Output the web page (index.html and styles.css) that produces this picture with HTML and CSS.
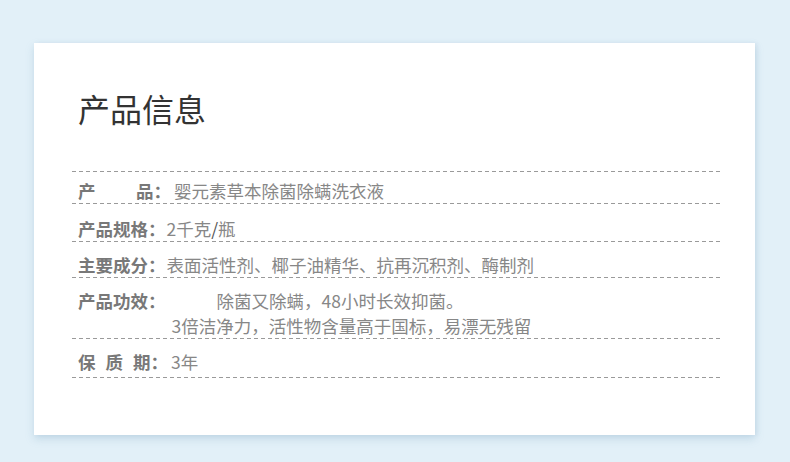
FILE: index.html
```html
<!DOCTYPE html>
<html lang="zh-CN">
<head>
<meta charset="utf-8">
<title>产品信息</title>
<link rel="stylesheet" href="styles.css">
</head>
<body>
<div class="page">
  <section class="card">
    <h1 class="title">产品信息</h1>
    <div class="list">
      <div class="row r1"><span class="label"><span class="sp1">产</span>品：</span><span class="value v1">婴元素草本除菌除螨洗衣液</span></div>
      <div class="row r2"><span class="label">产品规格：</span><span class="value v2">2千克<span class="slash">/</span>瓶</span></div>
      <div class="row r3"><span class="label">主要成分：</span><span class="value v2">表面活性剂、椰子油精华、抗再沉积剂、酶制剂</span></div>
      <div class="row r4"><span class="label">产品功效：</span><span class="value v4"><span class="l1">除菌又除螨，48小时长效抑菌。</span><span class="l2">3倍洁净力，活性物含量高于国标，易漂无残留</span></span></div>
      <div class="row r5"><span class="label"><span class="sp5">保质</span>期：</span><span class="value v5">3年</span></div>
    </div>
  </section>
</div>
</body>
</html>
```

FILE: styles.css
```css
html, body {
  margin: 0;
  padding: 0;
}
body {
  background: #e2f0f8;
  font-family: "Noto Sans CJK SC", "Noto Sans", sans-serif;
  width: 790px;
  height: 462px;
  overflow: hidden;
}
.page {
  padding: 43px 35px 0 34px;
}
.card {
  box-sizing: border-box;
  width: 721px;
  height: 392px;
  background: #fff;
  box-shadow: 0 4px 8px rgba(120, 160, 190, 0.28), 2px 0 4px rgba(120, 160, 190, 0.12);
  padding: 45px 35px 0 38px;
}
.title {
  margin: 0 0 43px 6px;
  font-size: 32px;
  line-height: 40px;
  font-weight: 400;
  color: #333;
}
.list {
  background: repeating-linear-gradient(to right, #9a9a9a 0 4px, transparent 4px 7px) top left / 100% 1px no-repeat;
  padding-top: 1px;
}
.row {
  display: flex;
  align-items: flex-start;
  padding-left: 6px;
  font-size: 17.5px;
  line-height: 25px;
  background: repeating-linear-gradient(to right, #9a9a9a 0 4px, transparent 4px 7px) bottom left / 100% 1px no-repeat;
}
.r1 { padding-top: 6px; padding-bottom: 1px; }
.r2 { padding-top: 12px; padding-bottom: 1px; }
.r3 { padding-top: 10px; padding-bottom: 1px; }
.r4 { padding-top: 10px; padding-bottom: 1px; }
.r5 { padding-top: 10px; padding-bottom: 4px; }
.label {
  color: #787878;
  font-weight: 700;
  white-space: nowrap;
}
.sp1 { letter-spacing: 40.5px; }
.sp5 { letter-spacing: 10px; }
.value {
  color: #878787;
  white-space: nowrap;
}
.v1 { margin-left: 3px; }
.v2 { margin-left: 1px; }
.v4 {
  display: flex;
  flex-direction: column;
  margin-left: 6px;
}
.v4 .l1 { padding-left: 45px; }
.v5 { margin-left: 3px; }
.slash { color: #555; }
```
